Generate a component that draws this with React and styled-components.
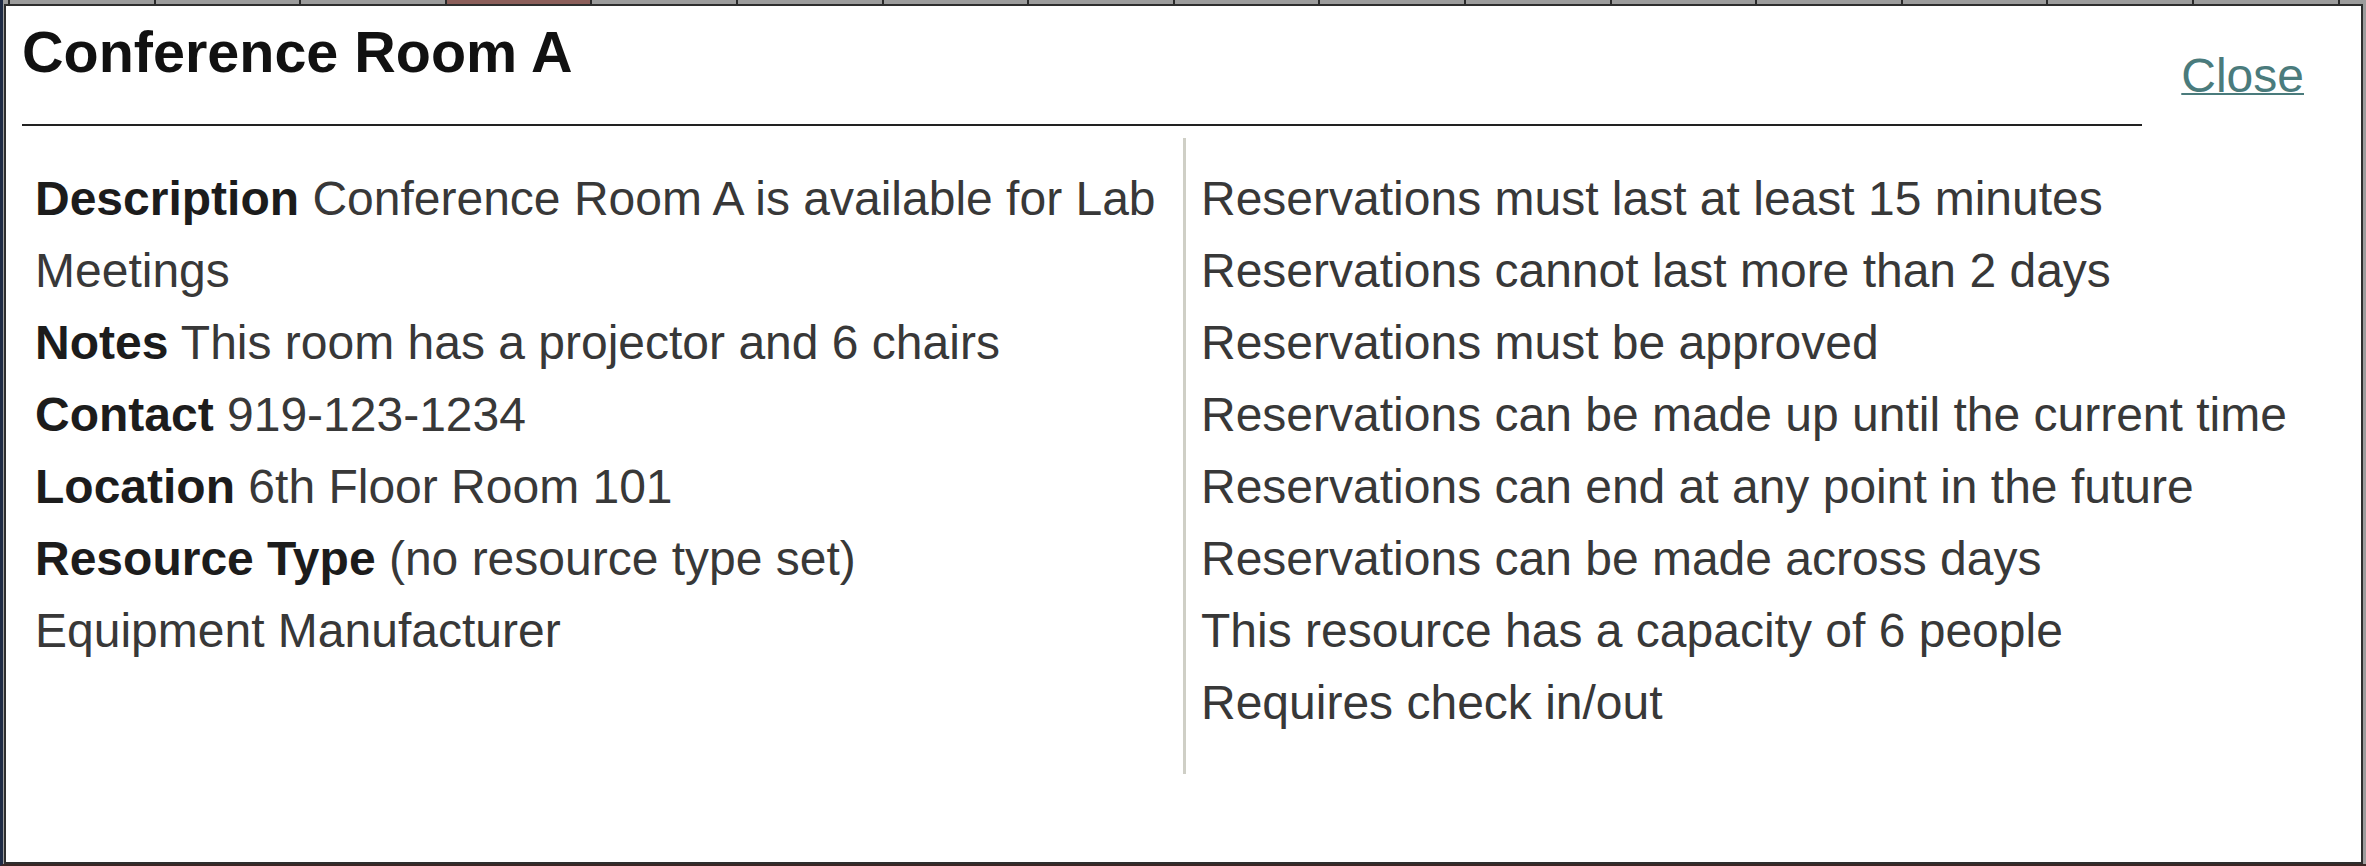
import React from 'react';
import styled, { createGlobalStyle } from 'styled-components';

const GlobalStyle = createGlobalStyle`
  html, body {
    margin: 0;
    padding: 0;
    background: #9c9c9c;
  }
  * {
    box-sizing: border-box;
  }
`;

const details = [
    { label: 'Description', value: 'Conference Room A is available for Lab Meetings' },
    { label: 'Notes', value: 'This room has a projector and 6 chairs' },
    { label: 'Contact', value: '919-123-1234' },
    { label: 'Location', value: '6th Floor Room 101' },
    { label: 'Resource Type', value: '(no resource type set)' },
    { label: null, value: 'Equipment Manufacturer' },
];

const rules = [
    'Reservations must last at least 15 minutes',
    'Reservations cannot last more than 2 days',
    'Reservations must be approved',
    'Reservations can be made up until the current time',
    'Reservations can end at any point in the future',
    'Reservations can be made across days',
    'This resource has a capacity of 6 people',
    'Requires check in/out',
];

function App() {
    return (
        <Page>
            <GlobalStyle />
            <Dialog>
                <Header>
                    <HeaderMain>
                        <Title>Conference Room A</Title>
                    </HeaderMain>
                    <CloseLink href="#">Close</CloseLink>
                </Header>

                <Body>
                    <Column>
                        {details.map((d, i) => (
                            <Line key={i}>
                                {d.label ? <><Label>{d.label}</Label> {d.value}</> : d.value}
                            </Line>
                        ))}
                    </Column>
                    <Column $divider>
                        {rules.map((r) => (
                            <Line key={r}>{r}</Line>
                        ))}
                    </Column>
                </Body>
            </Dialog>
        </Page>
    );
}

export default App;

const Page = styled.div`
    width: 2366px;
    height: 866px;
    padding: 4px 3px 0 1px;
    background-color: #9c9c9c;
    background-image:
        repeating-linear-gradient(90deg, #2b2b2b 0 2px, transparent 2px 145.6px),
        linear-gradient(#8c5f5a, #8c5f5a);
    background-position: 5px 0, 444px 0;
    background-size: 100% 5px, 144px 4px;
    background-repeat: no-repeat;
    border-bottom: 2px solid #3b2624;
    border-left: 3px solid #1f2b45;
`;

const Dialog = styled.div`
    height: 100%;
    background: #ffffff;
    border: 2px solid #2e2e2e;
    display: flex;
    flex-direction: column;
    font-family: "Liberation Sans", Arial, sans-serif;
`;

const Header = styled.div`
    display: flex;
    align-items: flex-start;
    padding-left: 16px;
`;

const HeaderMain = styled.div`
    flex: 1;
    border-bottom: 2px solid #222222;
    padding-bottom: 42px;
`;

const Title = styled.h2`
    margin: 18px 0 0;
    font-size: 57.5px;
    line-height: 1;
    font-weight: bold;
    color: #111111;
`;

const CloseLink = styled.a`
    margin: 46px 57px 0 39px;
    font-size: 48px;
    line-height: 1;
    color: #4a7b7c;
    text-decoration: underline;
    text-decoration-thickness: 2px;
`;

const Body = styled.div`
    display: flex;
    align-items: flex-start;
    margin-top: 12px;
`;

const Column = styled.div`
    flex: ${(p) => (p.$divider ? '1' : '0 0 1177px')};
    padding: ${(p) => (p.$divider ? '25px 20px 35px 15px' : '25px 8px 35px 29px')};
    border-left: ${(p) => (p.$divider ? '3px solid #cfcfc6' : 'none')};
`;

const Line = styled.div`
    font-size: 48px;
    line-height: 72px;
    color: #383838;
`;

const Label = styled.b`
    font-weight: bold;
    color: #1c1c1c;
`;
